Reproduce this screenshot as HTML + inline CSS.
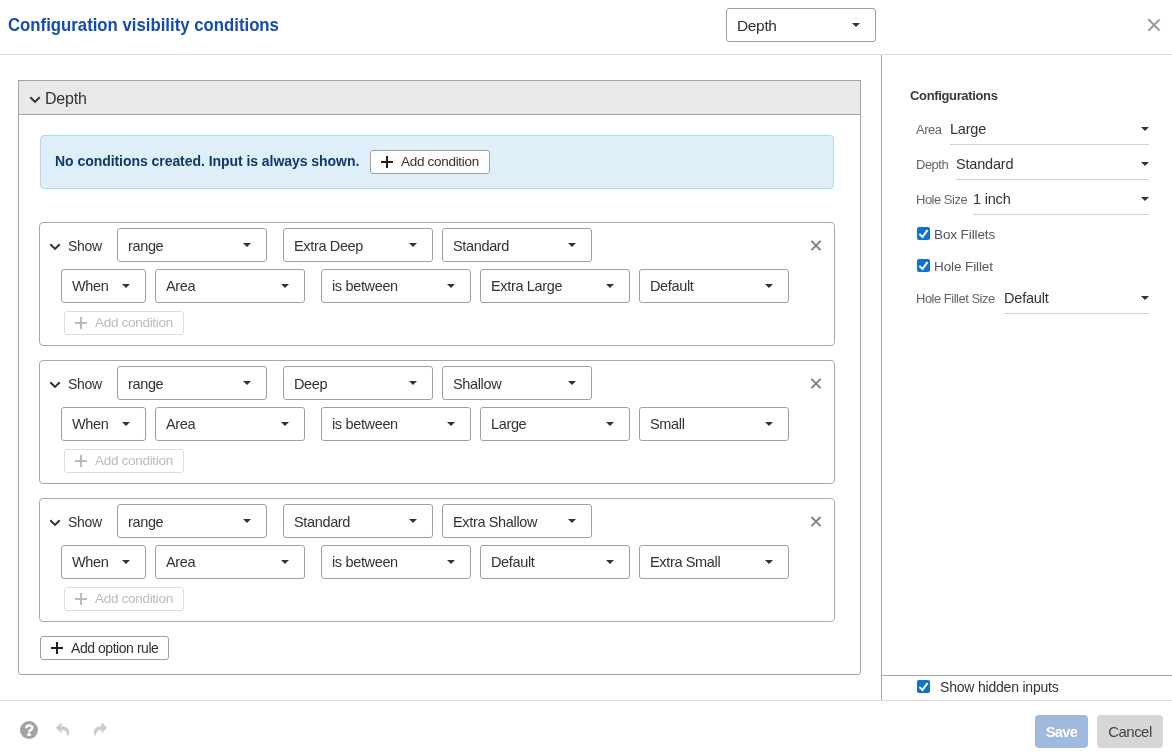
<!DOCTYPE html>
<html><head><meta charset="utf-8">
<style>
*{box-sizing:border-box;margin:0;padding:0}
html,body{width:1172px;height:756px;overflow:hidden;background:#fff;font-family:"Liberation Sans",sans-serif;color:#333}
.a{position:absolute}
.title{left:8px;top:12.5px;font-size:19px;font-weight:bold;color:#154cb0;letter-spacing:0;transform:scaleX(0.882);transform-origin:0 0;white-space:nowrap;line-height:24px}
.hsep{left:0;width:1172px;height:1px;background:#dde1e6}
.dd{position:absolute;height:34px;border:1px solid #a0a0a0;border-radius:3px;background:#fff;font-size:14.5px;line-height:34px;padding-left:10px;white-space:nowrap;letter-spacing:-0.35px;color:#333}
.car{position:absolute;width:0;height:0;border-left:4px solid transparent;border-right:4px solid transparent;border-top:4px solid #333}
.dd .car{right:15px;top:14px}
.sec{left:18px;top:80px;width:843px;height:595px;border:1px solid #a4a4a4;border-radius:0 0 3px 3px}
.sechead{left:18px;top:80px;width:843px;height:35px;background:#e9e9e9;border:1px solid #a4a4a4}
.chev{position:absolute;width:12px;height:8px}
.chev svg,.cb svg{display:block}
.info{left:40px;top:135px;width:794px;height:54px;background:#dfeff9;border:1px solid #acd9f1;border-radius:4px}
.btn{position:absolute;height:24px;border:1px solid #a0a0a0;border-radius:3px;background:#fff;font-size:13.5px;letter-spacing:-0.3px;line-height:22px;white-space:nowrap}
.plus{position:absolute;width:12px;height:12px}
.plus:before{content:"";position:absolute;left:5px;top:0;width:2px;height:12px;background:currentColor}
.plus:after{content:"";position:absolute;left:0;top:5px;width:12px;height:2px;background:currentColor}
.rule{position:absolute;left:39px;width:796px;height:124px;border:1px solid #a8a8a8;border-radius:4px}
.rlbl{position:absolute;font-size:14px;letter-spacing:-0.3px;line-height:16px;color:#333}
.xic{position:absolute;width:12px;height:12px}
.xic:before,.xic:after{content:"";position:absolute;left:5px;top:-0.5px;width:2px;height:13px;background:#808080}
.xic.big:before,.xic.big:after{top:-2px;height:16px;width:1.8px;background:#999}
.xic:before{transform:rotate(45deg)}.xic:after{transform:rotate(-45deg)}
.dis{border-color:#dcdcdc;color:#bbb}
.vdiv{left:881px;top:55px;width:1px;height:645px;background:#a8a8a8}
.lbl{position:absolute;font-size:13px;color:#666;letter-spacing:-0.5px;line-height:14px;white-space:nowrap}
.val{position:absolute;font-size:14.5px;color:#333;letter-spacing:-0.2px;line-height:16px;white-space:nowrap}
.uline{position:absolute;height:1px;background:#d0d0d0}
.cb{position:absolute;width:13px;height:13px;background:#0b72d6;border-radius:2px}
.cb svg{position:absolute;left:0;top:0}
.cbl{position:absolute;font-size:13.5px;color:#555;letter-spacing:-0.1px;line-height:14px;white-space:nowrap}
</style></head>
<body>
<div style="position:absolute;left:0;top:0;width:1172px;height:756px;will-change:transform">
<div class="a title">Configuration visibility conditions</div>
<div class="dd" style="left:726px;top:8px;width:150px;font-size:15.5px">Depth<div class="car"></div></div>
<div class="xic big" style="left:1148px;top:19px"></div>
<div class="a hsep" style="top:54px"></div>
<div class="a sec"></div>
<div class="a sechead"><div class="chev" style="left:10px;top:15px"><svg width="12" height="8" viewBox="0 0 12 8"><path d="M1.3 1.2 L6 5.9 L10.7 1.2" fill="none" stroke="#333" stroke-width="2"/></svg></div><div class="a" style="left:26px;top:9px;font-size:16px;letter-spacing:-0.2px;line-height:18px">Depth</div></div>
<div class="a info"><div class="a" style="left:14px;top:17px;font-size:14px;font-weight:bold;color:#0d3a6b;letter-spacing:-0.05px;white-space:nowrap;line-height:16px">No conditions created. Input is always shown.</div><div class="btn" style="left:329px;top:14px;width:120px;color:#333"><div class="plus" style="left:10px;top:5px;color:#222"></div><div class="a" style="left:30px;top:0;">Add condition</div></div></div>
<div class="rule" style="top:222px"></div>
<div class="chev" style="left:49px;top:243px"><svg width="12" height="8" viewBox="0 0 12 8"><path d="M1.3 1.2 L6 5.9 L10.7 1.2" fill="none" stroke="#333" stroke-width="2"/></svg></div>
<div class="rlbl" style="left:68px;top:238px">Show</div>
<div class="dd" style="left:117px;top:228px;width:150px">range<div class="car"></div></div>
<div class="dd" style="left:283px;top:228px;width:150px">Extra Deep<div class="car"></div></div>
<div class="dd" style="left:442px;top:228px;width:150px">Standard<div class="car"></div></div>
<div class="xic" style="left:810px;top:239px"></div>
<div class="dd" style="left:61px;top:269px;width:85px;line-height:32px">When<div class="car"></div></div>
<div class="dd" style="left:155px;top:269px;width:150px;line-height:32px">Area<div class="car"></div></div>
<div class="dd" style="left:321px;top:269px;width:150px;line-height:32px">is between<div class="car"></div></div>
<div class="dd" style="left:480px;top:269px;width:150px;line-height:32px">Extra Large<div class="car"></div></div>
<div class="dd" style="left:639px;top:269px;width:150px;line-height:32px">Default<div class="car"></div></div>
<div class="btn dis" style="left:64px;top:311px;width:120px"><div class="plus" style="left:10px;top:5px;color:#bbb"></div><div class="a" style="left:30px;top:0">Add condition</div></div>
<div class="rule" style="top:360px"></div>
<div class="chev" style="left:49px;top:381px"><svg width="12" height="8" viewBox="0 0 12 8"><path d="M1.3 1.2 L6 5.9 L10.7 1.2" fill="none" stroke="#333" stroke-width="2"/></svg></div>
<div class="rlbl" style="left:68px;top:376px">Show</div>
<div class="dd" style="left:117px;top:366px;width:150px">range<div class="car"></div></div>
<div class="dd" style="left:283px;top:366px;width:150px">Deep<div class="car"></div></div>
<div class="dd" style="left:442px;top:366px;width:150px">Shallow<div class="car"></div></div>
<div class="xic" style="left:810px;top:377px"></div>
<div class="dd" style="left:61px;top:407px;width:85px;line-height:32px">When<div class="car"></div></div>
<div class="dd" style="left:155px;top:407px;width:150px;line-height:32px">Area<div class="car"></div></div>
<div class="dd" style="left:321px;top:407px;width:150px;line-height:32px">is between<div class="car"></div></div>
<div class="dd" style="left:480px;top:407px;width:150px;line-height:32px">Large<div class="car"></div></div>
<div class="dd" style="left:639px;top:407px;width:150px;line-height:32px">Small<div class="car"></div></div>
<div class="btn dis" style="left:64px;top:449px;width:120px"><div class="plus" style="left:10px;top:5px;color:#bbb"></div><div class="a" style="left:30px;top:0">Add condition</div></div>
<div class="rule" style="top:498px"></div>
<div class="chev" style="left:49px;top:519px"><svg width="12" height="8" viewBox="0 0 12 8"><path d="M1.3 1.2 L6 5.9 L10.7 1.2" fill="none" stroke="#333" stroke-width="2"/></svg></div>
<div class="rlbl" style="left:68px;top:514px">Show</div>
<div class="dd" style="left:117px;top:504px;width:150px">range<div class="car"></div></div>
<div class="dd" style="left:283px;top:504px;width:150px">Standard<div class="car"></div></div>
<div class="dd" style="left:442px;top:504px;width:150px">Extra Shallow<div class="car"></div></div>
<div class="xic" style="left:810px;top:515px"></div>
<div class="dd" style="left:61px;top:545px;width:85px;line-height:32px">When<div class="car"></div></div>
<div class="dd" style="left:155px;top:545px;width:150px;line-height:32px">Area<div class="car"></div></div>
<div class="dd" style="left:321px;top:545px;width:150px;line-height:32px">is between<div class="car"></div></div>
<div class="dd" style="left:480px;top:545px;width:150px;line-height:32px">Default<div class="car"></div></div>
<div class="dd" style="left:639px;top:545px;width:150px;line-height:32px">Extra Small<div class="car"></div></div>
<div class="btn dis" style="left:64px;top:587px;width:120px"><div class="plus" style="left:10px;top:5px;color:#bbb"></div><div class="a" style="left:30px;top:0">Add condition</div></div>
<div class="btn" style="left:40px;top:636px;width:129px;height:24px;color:#333"><div class="plus" style="left:10px;top:5px;color:#222"></div><div class="a" style="left:30px;top:0px;font-size:14px;letter-spacing:-0.45px">Add option rule</div></div>
<div class="a vdiv"></div>
<div class="a" style="left:910px;top:89px;font-size:13px;font-weight:bold;color:#3a3a3a;letter-spacing:-0.35px;line-height:14px">Configurations</div>
<div class="lbl" style="left:916px;top:123px">Area</div>
<div class="val" style="left:950px;top:121px">Large</div>
<div class="car" style="left:1141px;top:127px"></div>
<div class="uline" style="left:950px;top:144px;width:199px"></div>
<div class="lbl" style="left:916px;top:158px">Depth</div>
<div class="val" style="left:956px;top:156px">Standard</div>
<div class="car" style="left:1141px;top:162px"></div>
<div class="uline" style="left:956px;top:179px;width:193px"></div>
<div class="lbl" style="left:916px;top:193px">Hole Size</div>
<div class="val" style="left:973px;top:191px">1 inch</div>
<div class="car" style="left:1141px;top:197px"></div>
<div class="uline" style="left:973px;top:214px;width:176px"></div>
<div class="cb" style="left:917px;top:227px"><svg width="13" height="13" viewBox="0 0 13 13"><path d="M2.4 7.0 L5.5 9.9 L10.6 3.0" fill="none" stroke="#fff" stroke-width="2"/></svg></div>
<div class="cbl" style="left:934px;top:228px">Box Fillets</div>
<div class="cb" style="left:917px;top:259px"><svg width="13" height="13" viewBox="0 0 13 13"><path d="M2.4 7.0 L5.5 9.9 L10.6 3.0" fill="none" stroke="#fff" stroke-width="2"/></svg></div>
<div class="cbl" style="left:934px;top:260px">Hole Fillet</div>
<div class="lbl" style="left:916px;top:292px">Hole Fillet Size</div>
<div class="val" style="left:1004px;top:290px">Default</div>
<div class="car" style="left:1141px;top:296px"></div>
<div class="uline" style="left:1004px;top:313px;width:145px"></div>
<div class="a" style="left:882px;top:675px;width:290px;height:1px;background:#a8a8a8"></div>
<div class="cb" style="left:917px;top:680px"><svg width="13" height="13" viewBox="0 0 13 13"><path d="M2.4 7.0 L5.5 9.9 L10.6 3.0" fill="none" stroke="#fff" stroke-width="2"/></svg></div>
<div class="a" style="left:940px;top:679px;font-size:14px;color:#333;letter-spacing:-0.2px;line-height:16px">Show hidden inputs</div>
<div class="a hsep" style="top:700px"></div>
<svg class="a" style="left:20px;top:721px" width="18" height="18" viewBox="0 0 18 18"><circle cx="9" cy="9" r="9" fill="#a2a2a2"/><path d="M6.1 7.2 C6.1 3.6 12.3 3.6 12.3 7.0 C12.3 8.9 9.1 8.9 9.1 11.2" fill="none" stroke="#fff" stroke-width="2.4"/><rect x="7.4" y="12.1" width="3.4" height="3" fill="#fff"/></svg>
<svg class="a" style="left:50px;top:716px" width="24" height="26" viewBox="0 0 24 26"><path d="M5.8 11.7 L11.5 6.2 L11.5 10.3 C16 10.3 19.5 12.5 19.2 16.5 C19 18.3 18.2 19.8 17.5 20.6 C17.6 16.8 15.2 13.7 11.5 13.7 L11.5 17.5 Z" fill="#cccccc"/></svg>
<svg class="a" style="left:89px;top:716px;transform:scaleX(-1)" width="24" height="26" viewBox="0 0 24 26"><path d="M5.8 11.7 L11.5 6.2 L11.5 10.3 C16 10.3 19.5 12.5 19.2 16.5 C19 18.3 18.2 19.8 17.5 20.6 C17.6 16.8 15.2 13.7 11.5 13.7 L11.5 17.5 Z" fill="#cccccc"/></svg>
<div class="a" style="left:1035px;top:715px;width:53px;height:33px;background:#a1b8df;border-radius:4px;color:#fff;font-weight:bold;font-size:14.5px;line-height:34px;text-align:center;letter-spacing:-0.6px">Save</div>
<div class="a" style="left:1097px;top:715px;width:66px;height:33px;background:#d6d6d6;border-radius:4px;color:#444;font-size:15px;line-height:34px;text-align:center;letter-spacing:-0.55px">Cancel</div>
</div>
</body></html>
